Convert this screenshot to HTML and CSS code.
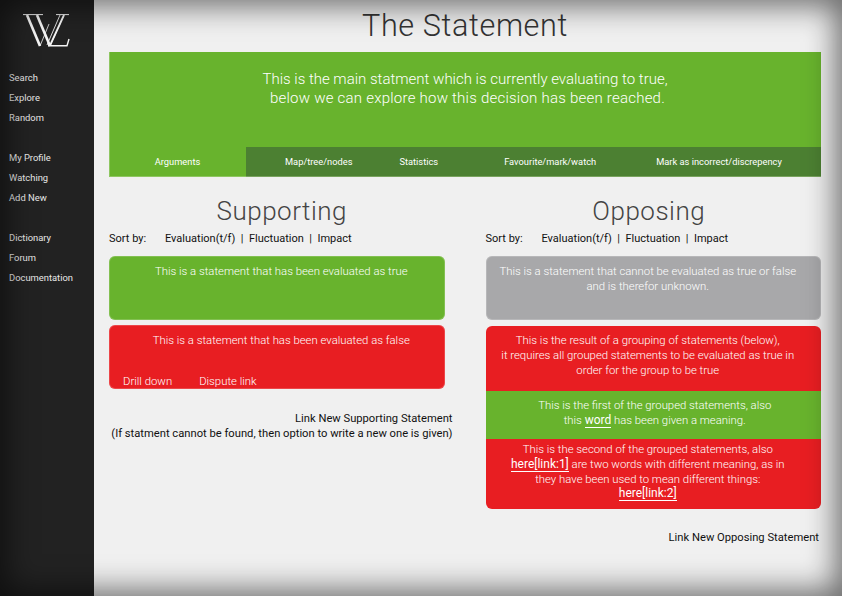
FILE: index.html
```html
<!DOCTYPE html>
<html lang="en">
<head>
<meta charset="utf-8">
<title>The Statement</title>
<link rel="stylesheet" href="styles.css">
</head>
<body>
<div class="page">
  <aside class="sidebar">
    <svg class="logo" viewBox="0 0 47 33" width="47" height="33" aria-label="WL">
      <g fill="none" stroke="#f4f4f4">
        <path d="M4 1 L17 32" stroke-width="2.6"/>
        <path d="M17 32 L26 10" stroke-width="0.8"/>
        <path d="M14 1 L27 32" stroke-width="2.6"/>
        <path d="M27 32 L41 1" stroke-width="0.8"/>
        <path d="M37 1 L24 31" stroke-width="0.9"/>
        <path d="M41 1 L27 31.5" stroke-width="1.8"/>
        <path d="M25 31.7 H44 L46 25" stroke-width="1.4"/>
        <path d="M0 0.6 H10 M10 0.6 H20 M33 0.6 H46" stroke-width="1"/>
      </g>
    </svg>
    <nav class="nav">
      <a>Search</a><a>Explore</a><a>Random</a>
      <a class="gap">My Profile</a><a>Watching</a><a>Add New</a>
      <a class="gap">Dictionary</a><a>Forum</a><a>Documentation</a>
    </nav>
  </aside>
  <main class="main">
    <h1 class="title">The Statement</h1>
    <section class="banner">
      <p class="banner-text">This is the main statment which is currently evaluating to true,<br><span class="line2">below we can explore how this decision has been reached.</span></p>
      <div class="tabs">
        <span class="tab active">Arguments</span>
        <div class="tab-rest">
          <span class="t1">Map/tree/nodes</span>
          <span class="t2">Statistics</span>
          <span class="t3">Favourite/mark/watch</span>
          <span class="t4">Mark as incorrect/discrepency</span>
        </div>
      </div>
    </section>
    <div class="columns">
      <section class="col">
        <h2 class="col-title left">Supporting</h2>
        <div class="sort"><span class="sort-label">Sort by:</span><span>Evaluation(t/f)&nbsp; |&nbsp; Fluctuation&nbsp; |&nbsp; Impact</span></div>
        <div class="card green tall offset-right"><p>This is a statement that has been evaluated as true</p></div>
        <div class="card red tall split">
          <p class="offset-right">This is a statement that has been evaluated as false</p>
          <div class="actions"><a>Drill down</a><a>Dispute link</a></div>
        </div>
        <p class="link-new first">Link New Supporting Statement<br>(If statment cannot be found, then option to write a new one is given)</p>
      </section>
      <section class="col">
        <h2 class="col-title right">Opposing</h2>
        <div class="sort"><span class="sort-label">Sort by:</span><span>Evaluation(t/f)&nbsp; |&nbsp; Fluctuation&nbsp; |&nbsp; Impact</span></div>
        <div class="card grey"><p>This is a statement that cannot be evaluated as true or false<br>and is therefor unknown.</p></div>
        <div class="group">
          <div class="g-item red g1"><p>This is the result of a grouping of statements (below),<br>it requires all grouped statements to be evaluated as true in<br>order for the group to be true</p></div>
          <div class="g-item green g2"><p>This is the first of the grouped statements, also<br>this <a class="word">word</a> has been given a meaning.</p></div>
          <div class="g-item red g3"><p>This is the second of the grouped statements, also<br><a class="word">here[link:1]</a> are two words with different meaning, as in<br>they have been used to mean different things:<br><a class="word">here[link:2]</a></p></div>
        </div>
        <p class="link-new second">Link New Opposing Statement</p>
      </section>
    </div>
  </main>
  <div class="vignette"></div>
</div>
</body>
</html>
```
FILE: styles.css
```css
* { box-sizing: border-box; }
html, body { margin: 0; padding: 0; }
body {
  width: 842px;
  height: 596px;
  overflow: hidden;
  font-family: Roboto, "Liberation Sans", Arial, sans-serif;
  font-weight: 300;
  color: #111;
  background: #f0f0f0;
}
p, h1, h2 { margin: 0; font-weight: 300; }
.page { position: relative; display: flex; width: 842px; height: 596px; overflow: hidden; }
.sidebar { flex: 0 0 94px; background: #222; padding: 14px 0 0 9px; }
.logo { display: block; margin: 0 0 0 14px; }
.nav { display: flex; flex-direction: column; margin-top: 21px; font-size: 9.4px; font-weight: 400; color: #e8e8e8; }
.nav a { height: 20px; line-height: 20px; }
.nav a.gap { margin-top: 20px; }
.main { flex: 1; padding: 0 21px 0 15px; min-width: 0; }
.title { height: 52px; padding-top: 8px; font-size: 30.6px; line-height: 36px; letter-spacing: 0.6px; text-align: center; color: #333; }
.banner { height: 125px; background: #68b32d; color: #fff; display: flex; flex-direction: column; justify-content: space-between; box-shadow: inset 1px -1px 0 rgba(255, 255, 255, 0.25); }
.banner-text { padding-top: 18px; font-size: 15px; line-height: 19px; text-align: center; }
.line2 { display: inline-block; margin-left: 5px; letter-spacing: 0.23px; }
.tabs { display: flex; height: 30px; font-size: 9.3px; line-height: 30px; font-weight: 400; }
.tab.active { flex: 0 0 137px; text-align: center; }
.tab-rest { flex: 1; display: flex; background: #4c8032; border-bottom: 1px solid #79a35f; }
.t1 { margin-left: 39px; }
.t2 { margin-left: 47px; }
.t3 { margin-left: 66px; }
.t4 { margin-left: 60px; }
.columns { display: flex; gap: 41px; padding-top: 19px; }
.col { flex: 1 1 0; min-width: 0; }
.col-title { font-size: 26px; line-height: 30px; letter-spacing: 0.5px; text-align: center; color: #444; }
.col-title.left { padding-left: 10px; }
.col-title.right { padding-right: 9px; }
.sort { display: flex; margin-top: 6px; font-size: 11px; line-height: 14px; font-weight: 400; color: #111; }
.sort-label { width: 56px; }
.card, .group { margin-top: 10px; font-size: 11.35px; line-height: 15px; color: #fff; text-align: center; border-radius: 6px; overflow: hidden; }
.card { padding: 8px 12px 0; box-shadow: inset 0 0 0 1px rgba(255, 255, 255, 0.18); }
.card.grey { padding-right: 23px; }
.tall { height: 64px; }
.offset-right { padding-left: 21px; }
.split { margin-top: 5px; display: flex; flex-direction: column; justify-content: space-between; padding-bottom: 0; }
.split .offset-right { padding-left: 9px; }
.green { background: #68b32d; }
.red { background: #e81e22; }
.grey { background: #a8a8aa; height: 64px; }
.actions { display: flex; gap: 27px; padding-left: 2px; }
.group { margin-top: 6px; }
.g-item { padding: 0 23px 0 12px; }
.g1 { height: 65px; padding-top: 7px; }
.g2 { height: 48px; padding: 7px 9px 0 12px; }
.g3 { height: 70px; padding-top: 3px; line-height: 14.5px; }
.word { display: inline-block; font-size: 12px; font-weight: 400; line-height: 13px; border-bottom: 1px solid #fff; }
.link-new { font-size: 11.2px; line-height: 15px; font-weight: 400; text-align: right; color: #111; }
.link-new.first { margin: 22px -8px 0 0; white-space: nowrap; }
.link-new.second { margin-top: 21px; padding-right: 2px; }
.vignette {
  position: absolute;
  inset: 0;
  pointer-events: none;
  box-shadow: inset 0 0 30px 6px rgba(0, 0, 0, 0.56);
}
```
